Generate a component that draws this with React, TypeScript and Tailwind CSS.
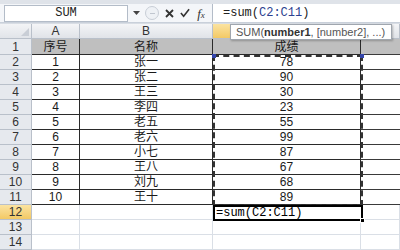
import React from "react";

const COLS = [
  { key: "A", w: "w-[48px]" },
  { key: "B", w: "w-[133px]" },
  { key: "C", w: "w-[148px]" },
  { key: "D", w: "flex-1" },
];

const DATA: string[][] = [
  ["序号", "名称", "成绩"],
  ["1", "张一", "78"],
  ["2", "张二", "90"],
  ["3", "王三", "30"],
  ["4", "李四", "23"],
  ["5", "老五", "55"],
  ["6", "老六", "99"],
  ["7", "小七", "87"],
  ["8", "王八", "67"],
  ["9", "刘九", "68"],
  ["10", "王十", "89"],
  ["", "", ""],
  ["", "", ""],
  ["", "", ""],
];

const CJK = "font-['Liberation_Sans','Noto_Sans_CJK_SC',sans-serif]";

export default function App() {
  return (
    <div className={`w-[400px] h-[250px] overflow-hidden bg-white relative ${CJK} text-[#1a1a1a]`}>
      {/* formula bar */}
      <div className="h-[4px] bg-[#dfe3e9]" />
      <div className="h-[19px] flex items-center bg-[#f4f6f9] border-b border-[#c9d0da]">
        <div className="ml-[4px] w-[124px] h-[17px] bg-white border border-[#b3bcc8] flex items-center justify-center font-['Liberation_Mono',monospace] text-[12px] text-[#222]">
          SUM
        </div>
        <div className="w-[17px] flex justify-center">
          <svg width="7" height="4" viewBox="0 0 7 4">
            <path d="M0 0h7L3.5 4z" fill="#444" />
          </svg>
        </div>
        <div className="w-[14px] h-[14px] rounded-full border border-[#c8ced6] bg-[#eef1f5] flex items-center justify-center">
          <div className="w-[5px] h-[1px] bg-[#c0c6cf]" />
        </div>
        <div className="w-[21px] flex justify-center">
          <svg width="9" height="9" viewBox="0 0 9 9">
            <path d="M1 1l7 7M8 1l-7 7" stroke="#333" strokeWidth="1.8" />
          </svg>
        </div>
        <div className="w-[10px] flex justify-center">
          <svg width="11" height="10" viewBox="0 0 11 10">
            <path d="M1 5l3 3.5L10 1" stroke="#333" strokeWidth="1.8" fill="none" />
          </svg>
        </div>
        <div className="w-[22px] flex justify-center items-end font-['Liberation_Serif',serif] italic text-[13px] text-[#333] leading-none">
          f<span className="text-[9px]">x</span>
        </div>
        <div className="flex-1 h-full bg-white border-l border-[#b3bcc8] flex items-center pl-[10px] font-['Liberation_Mono',monospace] text-[12px] text-[#222]">
          =sum(<span className="text-[#2c3f8f]">C2:C11</span>)
        </div>
      </div>
      <div className="h-[1px] bg-[#d8dde4]" />

      {/* column headers (C and D letters sit under the tooltip) */}
      <div className="h-[15px] flex text-[12px] text-[#333]">
        <div className="w-[32px] bg-gradient-to-b from-[#f3f4f6] to-[#e1e4e9] border-r border-b border-[#b9c0ca] relative">
          <svg className="absolute right-[2px] bottom-[2px]" width="8" height="8" viewBox="0 0 8 8">
            <path d="M8 0v8H0z" fill="#c9ced6" />
          </svg>
        </div>
        {COLS.map((c) => (
          <div
            key={c.key}
            className={`${c.w} flex items-center justify-center border-r border-b border-[#b9c0ca] leading-none ${
              c.key === "C"
                ? "bg-gradient-to-b from-[#fbe3a0] to-[#f3c964]"
                : "bg-gradient-to-b from-[#f4f5f7] to-[#e0e3e8]"
            }`}
          >
            {c.key === "A" || c.key === "B" ? c.key : ""}
          </div>
        ))}
      </div>

      {/* rows */}
      {DATA.map((row, i) => {
        const n = i + 1;
        const inTable = n <= 11;
        const isHead = n === 1;
        const active = n === 12;
        return (
          <div key={n} className={`flex ${isHead ? "h-[16px]" : "h-[15px]"} text-[12px]`}>
            <div
              className={`w-[32px] flex items-center justify-center border-r border-b border-[#b9c0ca] leading-none ${
                active
                  ? "bg-gradient-to-b from-[#fbe3a0] to-[#f3c964] text-[#333]"
                  : "bg-[#e6e9ee] text-[#333]"
              }`}
            >
              {n}
            </div>
            {COLS.map((c, ci) => {
              const text = ci < 3 ? row[ci] : "";
              const border = inTable
                ? ci < 3
                  ? "border-r border-b border-[#2a2a2a]"
                  : "border-b border-[#3a3a3a]"
                : "border-r border-b border-[#dadfe6]";
              return (
                <div
                  key={c.key}
                  className={`${c.w} ${border} ${isHead ? "bg-[#bfbfbf]" : ""} flex items-center justify-center leading-none`}
                >
                  {text}
                </div>
              );
            })}
          </div>
        );
      })}

      {/* copy marquee around C2:C11 */}
      <div className="absolute left-[213px] top-[55px] w-[150px] h-[151px] border-2 border-dashed border-[#333] pointer-events-none" />
      <div className="absolute left-[212px] top-[54px] w-[4px] h-[4px] bg-[#3344aa]" />
      <div className="absolute left-[360px] top-[54px] w-[4px] h-[4px] bg-[#3344aa]" />

      {/* active cell C12 */}
      <div className="absolute left-[213px] top-[205px] w-[150px] h-[16px] border-2 border-black bg-white flex items-center pl-[1px] font-['Liberation_Mono',monospace] text-[12px] text-black leading-none">
        =sum(C2:C11)
      </div>
      <div className="absolute left-[360px] top-[218px] w-[5px] h-[5px] bg-black border border-white" />

      {/* function tooltip */}
      <div className="absolute left-[230px] top-[24px] w-[162px] h-[16px] bg-white border border-[#a0a6ae] shadow-[1px_1px_2px_rgba(0,0,0,0.25)] flex items-center pl-[5px] text-[11px] text-[#555] leading-none whitespace-nowrap">
        SUM(<b className="text-[#333]">number1</b>, [number2], ...)
      </div>
    </div>
  );
}
